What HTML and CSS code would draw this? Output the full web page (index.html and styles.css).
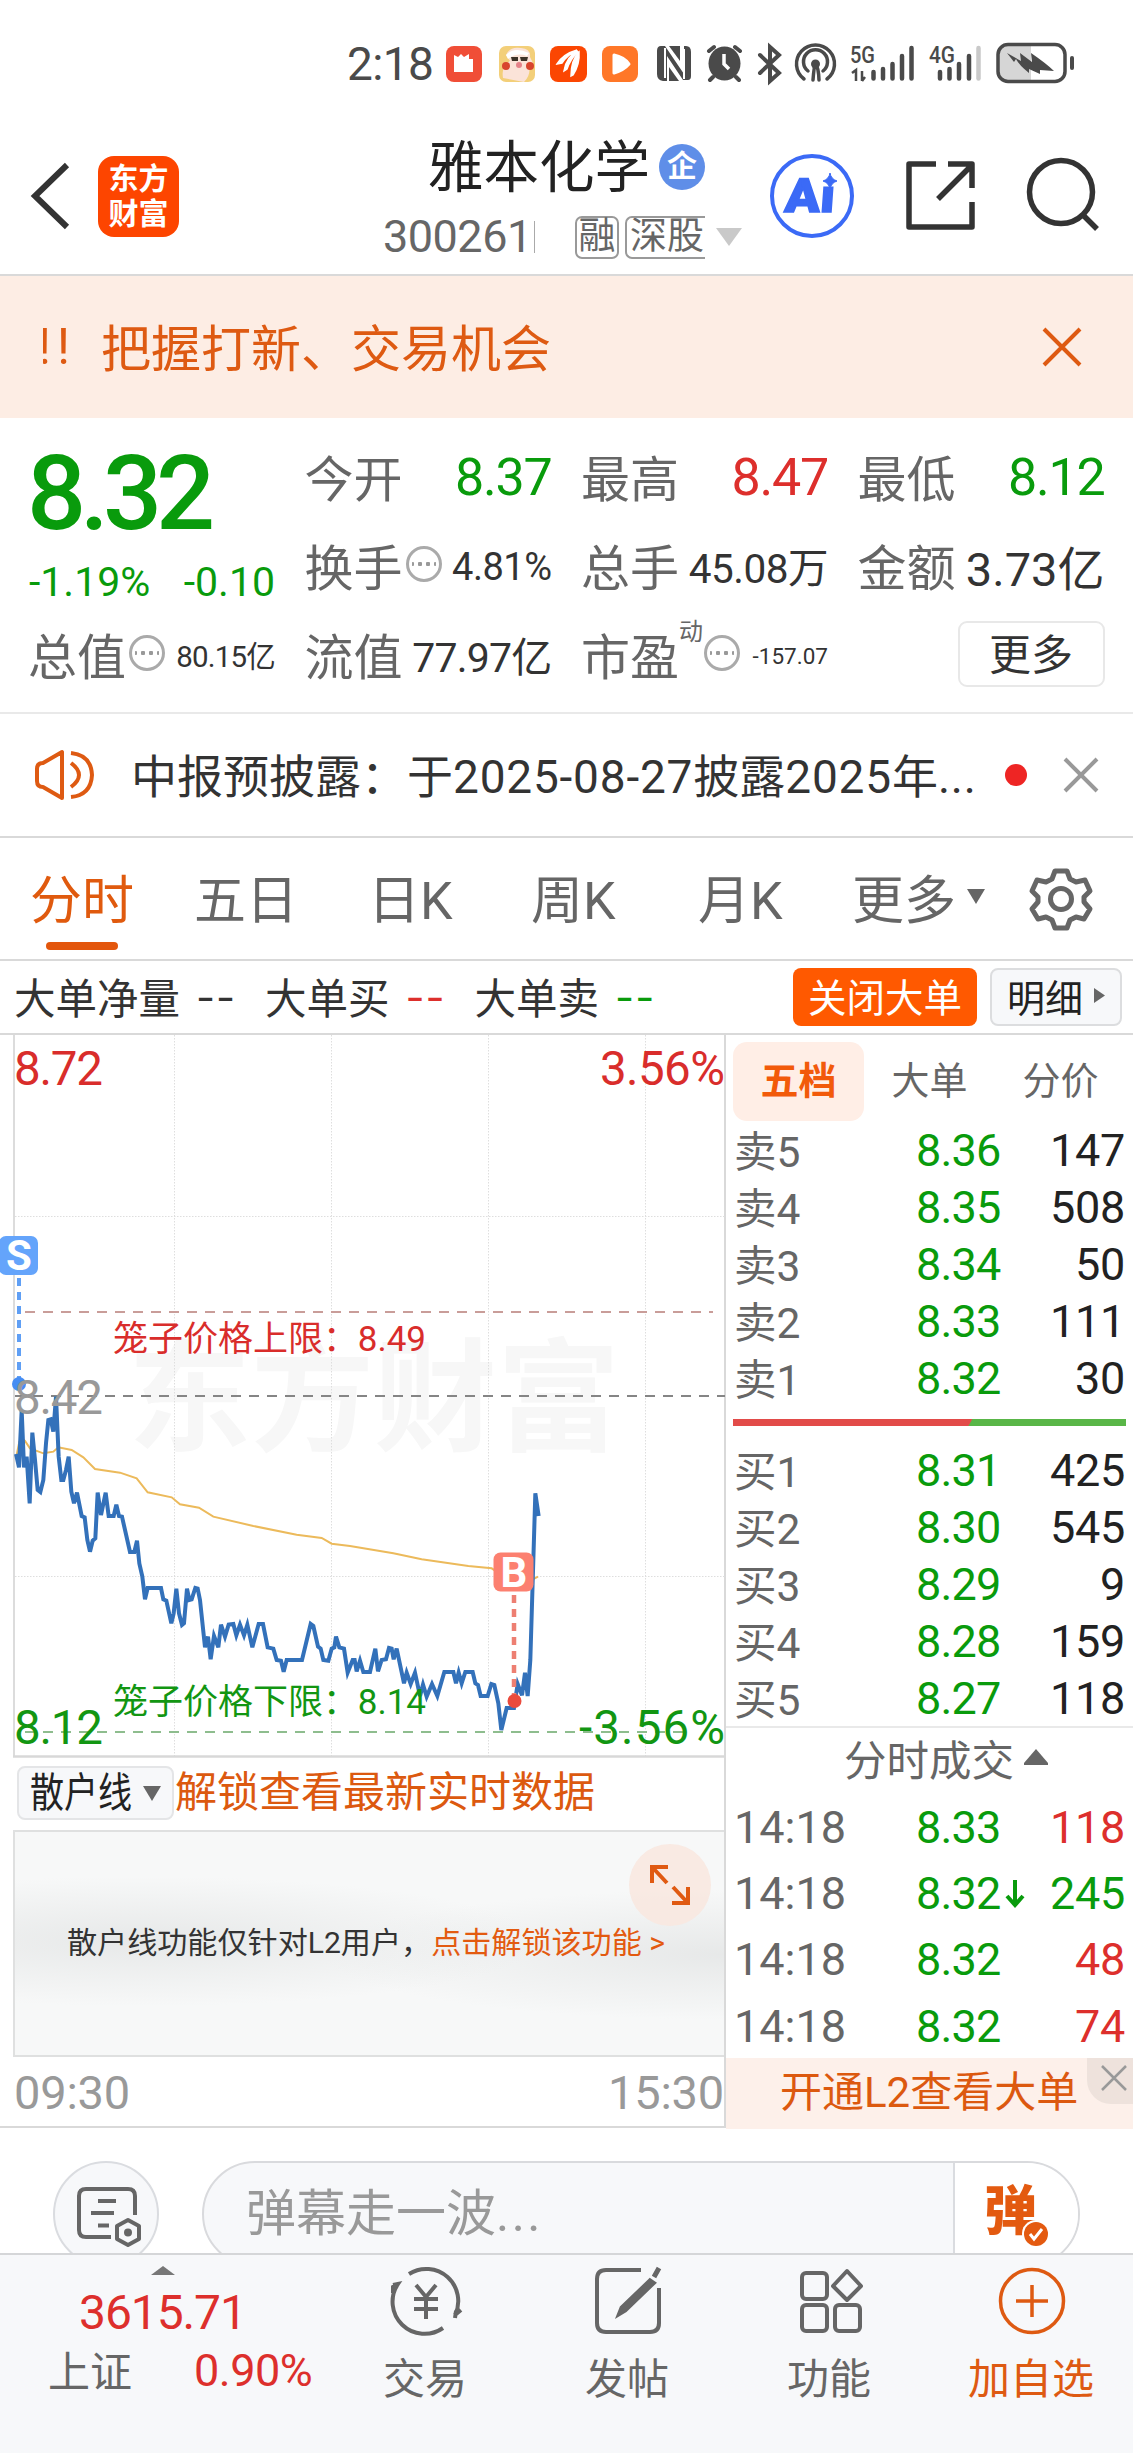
FILE: index.html
```html
<!DOCTYPE html>
<html lang="zh-CN">
<head>
<meta charset="utf-8">
<title>雅本化学 300261</title>
<link rel="stylesheet" href="styles.css">
</head>
<body>
<div class="status">
  <span class="clock">2:18</span>
  <svg class="status-icons" width="640" height="44" viewBox="440 42 640 44">
    <rect x="446" y="46" width="36" height="36" rx="8" fill="#f04e37"/>
    <path d="M454 55l4 2 3-3 3 3 5-3v5h4v13h-19z" fill="#fff"/>
    <rect x="499" y="46" width="36" height="36" rx="7" fill="#f3cf79"/>
    <path d="M503 78q-2-13 7-17l-4-6q4-9 15-7 10 1 9 9l3 6q0 4-4 4 2 8-5 15z" fill="#fbe3d8"/>
    <path d="M506 55q8-9 23-2l-2 3q-10-4-19 3z" fill="#fff"/>
    <path d="M511 57h7v4h-6zm9 0h8l-1 4h-6z" fill="#3d3328"/>
    <circle cx="519" cy="65" r="3" fill="#e5838a"/><circle cx="506" cy="66" r="4" fill="#d8452d"/><circle cx="530" cy="66" r="4" fill="#d8452d"/>
    <rect x="550" y="46" width="37" height="36" rx="8" fill="#fb4602"/>
    <path d="M557 64q6-10 20-14-10 5-15 13zM564 71q2-14 14-20-8 9-11 18zM571 76q0-16 8-24 1 12-6 23z" fill="#fff" stroke="#fff" stroke-width="1.500"/>
    <rect x="602" y="46" width="36" height="36" rx="8" fill="#ff7728"/>
    <path d="M614 55q10 2 15 9-5 6-15 9z" fill="#fff" stroke="#fff" stroke-width="3" stroke-linejoin="round"/>
    <g fill="#4a4a4a">
      <path d="M665 46l19 28V46h2q5 0 5 6v24q0 4-3 4h-5l-16-24v25h-4q-6-1-6-7V51q0-5 4-5z"/>
      <path d="M669 46h11v15z"/><path d="M669 81h10l-10-14z" />
      <ellipse cx="724.500" cy="63.500" rx="16" ry="17"/>
    </g>
    <path d="M665 48v30M684 49v30" stroke="#fff" stroke-width="2"/>
    <g fill="none" stroke="#4a4a4a" stroke-width="4" stroke-linecap="round">
      <path d="M709 51l5-4M740 51l-5-4M713 77l-3 3M736 77l3 3M760 55l19 18-9 8V47l9 8-19 18"/>
      <path d="M804 79a19 19 0 1 1 23 0M808 71a12 12 0 1 1 15 0" stroke-width="3.500"/>
      <path d="M813 80q1-14 2.500-16 3 3 3.500 16" stroke-width="3.500"/>
    </g>
    <path d="M724 54v10l5 5" fill="none" stroke="#fff" stroke-width="3.500"/>
    <circle cx="815.500" cy="64" r="4.500" fill="#4a4a4a"/>
    <g class="net"><text x="850" y="63" textLength="25" lengthAdjust="spacingAndGlyphs">5G</text><text x="929" y="63" textLength="26" lengthAdjust="spacingAndGlyphs">4G</text></g>
    <g fill="none" stroke="#4a4a4a" stroke-width="4.500" stroke-linecap="round">
      <path d="M873.500 72v6.500M883 69v9.500M892.500 64v14.500M902 56v22.500M911.500 48v30.500M940 72v6.500M949.500 69v9.500M959 64v14.500M969 56v22.500"/>
      <path d="M978.500 48v30.500" stroke="#c9c9c9"/>
    </g>
    <path d="M852 73l4-3v11m6 0v-10m0 10l3-4" stroke="#4a4a4a" stroke-width="2.500" fill="none"/>
    <path d="M1008 45h23v36h-23q-10 0-10-10V55q0-10 10-10z" fill="#d6d6d6"/>
    <rect x="998" y="44.500" width="67" height="37" rx="10" fill="none" stroke="#4a4a4a" stroke-width="3.500"/>
    <path d="M1007 53l14 8-1-8 12 9-1-9q16 11 23 18l-14-1v4l-11-5v4q-10-8-13-14l-2 3z" fill="#4a4a4a"/>
    <path d="M1072 58v10" stroke="#4a4a4a" stroke-width="4" stroke-linecap="round"/>
  </svg>
</div>

<header class="header">
  <svg width="44" height="70" viewBox="0 0 44 70"><path d="M39 4L7 35l32 31" fill="none" stroke="#333" stroke-width="6"/></svg>
  <div class="logo"><span>东方</span><span>财富</span></div>
  <div class="stock">
    <div class="name">雅本化学<i class="firm">企</i></div>
    <div class="code"><span class="num">300261</span><span class="tag">融</span><span class="tag cut">深股通</span><svg width="26" height="18" viewBox="0 0 26 18"><path d="M0 0h26L13 18z" fill="#c9c9c9"/></svg></div>
  </div>
  <svg class="tools" width="340" height="90" viewBox="766 151 340 90">
    <circle cx="812" cy="196" r="40" fill="none" stroke="#3b6af6" stroke-width="4"/>
    <g transform="translate(784 212) skewX(-4)"><text class="ai" textLength="50" lengthAdjust="spacingAndGlyphs">Aı</text></g>
    <path d="M830 173q1 6 7 8-6 2-7 8-1-6-7-8 6-2 7-8z" fill="#3b6af6" stroke="#3b6af6"/>
    <g fill="none" stroke="#333" stroke-width="5.500" stroke-linejoin="round">
      <path d="M936 164h-27v63h63v-25M948 164h24v24M972 165l-34 34"/>
      <circle cx="1061" cy="192" r="31.500"/><path d="M1083 215l14 14"/>
    </g>
  </svg>
</header>

<div class="banner"><span class="clip">!</span><span class="bang">!</span><span class="msg">把握打新、交易机会</span>
  <svg width="40" height="40" viewBox="0 0 40 40"><path d="M2 2l36 36M38 2L2 38" stroke="#de5a12" stroke-width="4"/></svg>
</div>

<section class="quote">
  <div class="now">
    <b class="last">8.32</b>
    <div class="chg"><span>-1.19%</span><span>-0.10</span></div>
  </div>
  <div class="cell"><label>今开</label><b class="v52 g">8.37</b></div>
  <div class="cell"><label>最高</label><b class="v52 r">8.47</b></div>
  <div class="cell"><label>最低</label><b class="v52 g">8.12</b></div>
  <div class="cell"><label>换手</label><i class="dots"></i><b class="v38">4.81%</b></div>
  <div class="cell"><label>总手</label><b class="v41">45.08万</b></div>
  <div class="cell"><label>金额</label><b class="v49">3.73亿</b></div>
  <div class="cell"><label>总值</label><i class="dots"></i><b class="v30">80.15亿</b></div>
  <div class="cell"><label>流值</label><b class="v42">77.97亿</b></div>
  <div class="cell"><label>市盈<sup>动</sup></label><i class="dots after-sup"></i><b class="v22">-157.07</b></div>
  <div class="cell end"><button class="more">更多</button></div>
</section>

<div class="notice">
  <svg width="64" height="54" viewBox="32 748 64 54" fill="none" stroke="#de5a12" stroke-width="4" stroke-linejoin="round"><path d="M62 752v46l-19-11q-6 0-6-6v-12q0-6 6-6z"/><path d="M71 763q16 12 0 24" /><path d="M71 753q20 2 21 22-1 20-21 22"/></svg>
  <span class="text">中报预披露：于<span>2025-08-27</span>披露<span>2025</span>年<span>...</span></span>
  <i class="dot"></i>
  <svg width="36" height="36" viewBox="0 0 36 36"><path d="M2 2l32 32M34 2L2 34" stroke="#999" stroke-width="4"/></svg>
</div>

<nav class="tabs">
  <span class="on">分时</span><span>五日</span><span>日K</span><span>周K</span><span>月K</span><span>更多<svg width="18" height="15" viewBox="0 0 18 15"><path d="M0 0h18L9 15z" fill="#666"/></svg></span>
  <svg class="gear" width="66" height="66" viewBox="-33 -33 66 66" fill="none" stroke="#666" stroke-width="5" stroke-linejoin="round"><path d="M-6-28H6L9-20 15-17 24-19 29-8 23-2V3L29 10 23 20 15 18 9 21 6 29H-6L-9 21-15 18-23 20-29 10-23 3V-2L-29-8-24-19-15-17-9-20z"/><circle r="10.500"/></svg>
</nav>

<div class="bigrow">
  <span>大单净量</span><i>--</i><span>大单买</span><i class="r">--</i><span>大单卖</span><i class="g">--</i>
  <button class="close-big">关闭大单</button>
  <button class="detail">明细<svg width="11" height="15" viewBox="0 0 11 15"><path d="M0 0l11 7.500L0 15z" fill="#666"/></svg></button>
</div>

<main class="board">
  <div class="left">
    <svg class="chart" width="725" height="724" viewBox="0 1035 725 724">
      <g class="mark"><text x="128" y="1441" textLength="492" lengthAdjust="spacingAndGlyphs">东方财富</text></g>
      <path d="M174.500 1035v722M331.500 1035v722M488.500 1035v722M645.500 1035v722M15 1216.500h710M15 1576.500h710" stroke="#dedede" stroke-dasharray="1.500 1.500"/>
      <path d="M14 1035v722" stroke="#dcdcdc" stroke-width="2"/>
      <path d="M13 1756.500h712" stroke="#d8d8d8" stroke-width="2.500"/>
      <path d="M25 1312h688" stroke="#c99d99" stroke-width="2" stroke-dasharray="10 8"/>
      <path d="M15 1396h710" stroke="#858585" stroke-width="2" stroke-dasharray="10 8"/>
      <path d="M25 1732h660" stroke="#8ebd8e" stroke-width="2" stroke-dasharray="10 8"/>
      <g transform="translate(0 1380) scale(.33333)" fill="none">
        <path stroke="#ecba5b" stroke-width="6" d="M50 225L58 185 66 175 75 183 90 205 130 220 160 215 175 202 215 210 250 232 285 267 360 278 410 295 443 337 515 352 540 373 597 383 640 410 760 438 890 464 965 474 995 491 1050 498 1180 520 1265 538 1405 558 1475 565 1505 585 1595 600 1614 590"/>
        <path stroke="#3371ba" stroke-width="12" d="M48 222L57 262 65 90 72 262 80 230 89 370 97 158 105 240 113 330 121 336 130 300 138 190 145 120 152 118 160 155 168 50 176 230 184 300 190 300 198 270 206 230 214 335 222 370 231 338 245 408 254 412 262 480 270 515 278 482 286 475 293 338 303 405 317 338 326 408 341 408 349 374 357 408 366 410 390 516 403 516 411 482 418 550 427 590 435 658 443 624 483 624 490 658 499 662 514 730 521 700 529 626 537 700 546 735 552 730 561 626 568 660 575 658 586 624 593 626 600 660 615 802 624 770 632 838 642 768 655 802 663 734 675 770 686 734 700 732 709 766 720 734 732 766 742 734 757 802 776 732 789 732 803 802 820 806 830 840 843 842 851 875 860 840 906 840 932 732 940 738 954 800 962 806 970 840 985 842 995 806 1003 802 1008 770 1018 802 1032 806 1043 878 1058 840 1064 840 1070 874 1080 842 1090 876 1110 876 1126 806 1134 874 1145 840 1158 838 1167 804 1175 806 1181 838 1190 806 1212 910 1220 878 1232 912 1245 878 1260 948 1269 914 1280 950 1296 912 1312 948 1333 876 1360 876 1368 910 1376 878 1385 910 1396 876 1418 876 1426 910 1434 915 1442 948 1463 948 1474 912 1483 915 1495 970 1504 1050 1520 984 1542 984 1553 912 1566 946 1575 878 1583 948 1591 840 1606 340 1616 408"/>
      </g>
      <path d="M19 1278v102" stroke="#5f9ff5" stroke-width="4" stroke-dasharray="8 6"/><circle cx="19" cy="1384" r="7" fill="#468df3"/>
      <rect x="-1" y="1236" width="39" height="39" rx="7" fill="#64a4fb"/><text class="sb" x="19" y="1270">S</text>
      <path d="M514 1595v100" stroke="#ed7f72" stroke-width="4.500" stroke-dasharray="8 6"/><circle cx="514.500" cy="1701" r="7" fill="#ea4b3d"/>
      <rect x="493.500" y="1552.500" width="40" height="39" rx="7" fill="#fc8070"/><text class="sb" x="514" y="1587">B</text>
      <g class="axis">
        <text class="fr" x="14" y="1085" textLength="89">8.72</text>
        <text class="fr" x="600" y="1085" textLength="125">3.56%</text>
        <text fill="#999" x="14" y="1414" textLength="89">8.42</text>
        <text class="fg" x="14" y="1744" textLength="89">8.12</text>
        <text class="fg" x="579" y="1744" textLength="146">-3.56%</text>
        <text class="cage fr" x="113" y="1351" textLength="313">笼子价格上限：8.49</text>
        <text class="cage fg" x="113" y="1714" textLength="313">笼子价格下限：8.14</text>
      </g>
    </svg>
    <div class="line-row"><button class="pick"><span>散户线</span><svg width="18" height="15" viewBox="0 0 18 15"><path d="M0 0h18L9 15z" fill="#666"/></svg></button><span class="unlock">解锁查看最新实时数据</span></div>
    <div class="locked">
      <p>散户线功能仅针对L2用户，<em>点击解锁该功能 &gt;</em></p>
      <div class="expand"><svg width="44" height="44" viewBox="0 0 44 44" fill="none" stroke="#e05a12" stroke-width="4"><path d="M20 4H4v16M5 5l14 15M24 40h16V24M39 39L25 24"/></svg></div>
    </div>
    <div class="times"><span>09:30</span><span>15:30</span></div>
  </div>
  <aside class="side">
    <div class="stabs"><b>五档</b><span>大单</span><span>分价</span></div>
    <div class="book">
      <div><label>卖5</label><b>8.36</b><span>147</span></div>
      <div><label>卖4</label><b>8.35</b><span>508</span></div>
      <div><label>卖3</label><b>8.34</b><span>50</span></div>
      <div><label>卖2</label><b>8.33</b><span>111</span></div>
      <div><label>卖1</label><b>8.32</b><span>30</span></div>
    </div>
    <div class="ratio"></div>
    <div class="book buy">
      <div><label>买1</label><b>8.31</b><span>425</span></div>
      <div><label>买2</label><b>8.30</b><span>545</span></div>
      <div><label>买3</label><b>8.29</b><span>9</span></div>
      <div><label>买4</label><b>8.28</b><span>159</span></div>
      <div><label>买5</label><b>8.27</b><span>118</span></div>
    </div>
    <div class="deal-head">分时成交<svg width="24" height="16" viewBox="0 0 24 16"><path d="M12 0l12 14v2H0v-2z" fill="#666"/></svg></div>
    <div class="deals">
      <div><label>14:18</label><b>8.33</b><span class="r">118</span></div>
      <div><label>14:18</label><b>8.32<svg width="20" height="28" viewBox="0 0 20 28" fill="none" stroke="#099b0c" stroke-width="4"><path d="M10 0v25M2 16l8 9 8-9"/></svg></b><span class="g">245</span></div>
      <div><label>14:18</label><b>8.32</b><span class="r">48</span></div>
      <div><label>14:18</label><b>8.32</b><span class="r">74</span></div>
    </div>
    <div class="promo">开通L2查看大单<i><svg width="26" height="26" viewBox="0 0 26 26"><path d="M1 1l24 24M25 1L1 25" stroke="#999" stroke-width="2.500"/></svg></i></div>
  </aside>
</main>

<div class="danmu">
  <div class="round"><svg width="66" height="62" viewBox="74 2186 66 62" fill="none" stroke="#666" stroke-width="4" stroke-linejoin="round"><path d="M134 2214v-19q0-7-7-7H85q-7 0-7 7v34q0 7 7 7h25M97 2200h18M90 2212h23M97 2224.500h11"/><path d="M127 2219l11 6v13l-11 6-11-6v-13z"/><circle cx="127" cy="2231.500" r="2"/></svg></div>
  <div class="field"><span>弹幕走一波<em>...</em></span><div class="send"><b>弹</b><svg width="30" height="30" viewBox="-15 -15 30 30"><circle r="14" fill="#fff"/><circle r="12" fill="#e45a10"/><path d="M-6 0l4 5L6-5" fill="none" stroke="#fff" stroke-width="3"/></svg></div></div>
</div>

<footer class="foot">
  <div class="index">
    <svg width="24" height="9" viewBox="0 0 24 9"><path d="M12 0l12 9H0z" fill="#777"/></svg>
    <b>3615.71</b>
    <div><label>上证</label><span>0.90%</span></div>
  </div>
  <div class="item"><svg width="80" height="72" viewBox="-40 -36 80 72" fill="none" stroke="#666" stroke-width="4"><path d="M-17-27A32 32 0 0 1 29 14L35 9M-33-16l5-1A32 32 0 0 0 17 27M-33-8v-6l5-3M29 17l1-7M-10-16L0-4 10-16M0-4v22M-12-2h24M-12 8h24"/></svg>交易</div>
  <div class="item"><svg width="72" height="72" viewBox="-36 -36 72 72" fill="none" stroke="#666" stroke-width="4"><path d="M13-31H-22q-9 0-9 9V22q0 9 9 9H22q9 0 9-9V-13"/><path d="M31-33L26-24M22-20L-6 7-8 12-3 9 25-18z" stroke-width="5"/></svg>发帖</div>
  <div class="item"><svg width="72" height="72" viewBox="-36 -36 72 72" fill="none" stroke="#666" stroke-width="4"><rect x="-28" y="-28" width="25" height="26" rx="4"/><rect x="-28" y="4" width="25" height="26" rx="4"/><rect x="5" y="4" width="25" height="26" rx="4"/><path d="M17-30L31-15 17-1 3-15z" stroke-linejoin="round"/></svg>功能</div>
  <div class="item hot"><svg width="72" height="72" viewBox="-36 -36 72 72" fill="none" stroke="#de5a12" stroke-width="3.500"><circle r="31.500"/><path d="M-16 0H16M0-16V16"/></svg>加自选</div>
</footer>
</body>
</html>
```
FILE: styles.css
```css
* { box-sizing: border-box; }
body { margin: 0; width: 1133px; height: 2453px; overflow: hidden; background: #fff; color: #333; font-family: Roboto, "Noto Sans CJK SC", sans-serif; }
i, em { font-style: normal; }
b { font-weight: 400; }
svg { display: block; flex: none; }
button { font: inherit; color: inherit; padding: 0 0 4px; margin: 0; display: flex; align-items: center; justify-content: center; }
.r { color: #dd2f2c; }
.g { color: #099b0c; }
.fr { fill: #d92d2b; }
.fg { fill: #129612; }

.status { height: 128px; padding-left: 347px; display: flex; align-items: center; }
.clock { width: 93px; font-size: 46px; letter-spacing: -.6px; color: #4a4a4a; }
.net { font-size: 24px; font-weight: 500; fill: #4a4a4a; }

.header { height: 148px; padding: 0 27px 3px 28px; display: flex; align-items: flex-start; border-bottom: 2px solid #d9d9d9; }
.header > svg:first-child { margin-top: 33px; }
.logo { margin: 28px 0 0 26px; width: 81px; height: 81px; padding-bottom: 2px; border-radius: 16px; background: #fd4500; color: #fff; font-weight: 700; font-size: 30px; line-height: 35px; display: flex; flex-direction: column; align-items: center; justify-content: center; }
.stock { width: 366px; margin-left: 202px; }
.name { height: 74px; padding: 0 0 4px 47px; display: flex; align-items: center; font-size: 55.500px; color: #222; }
.firm { width: 46px; height: 46px; margin: 7px 0 0 9px; border-radius: 50%; background: #5f8ee8; color: #fff; font-size: 30px; font-weight: 700; line-height: 43px; text-align: center; }
.code { height: 64px; margin-top: 3px; padding-left: 2px; display: flex; align-items: center; color: #666; font-size: 45px; }
.num { width: 152px; letter-spacing: -.5px; border-right: 1px solid #aaa; line-height: 32px; }
.tag { border: 2px solid #999; border-radius: 7px; width: 44px; height: 43px; line-height: 37px; font-size: 37px; text-align: center; margin-left: 40px; }
.tag.cut { margin-left: 6px; width: 80px; padding-left: 3px; border-right: 0; border-radius: 7px 0 0 7px; overflow: hidden; white-space: nowrap; text-align: left; }
.code svg { margin: 0 0 0 11px; }
.tools { margin: 23px 0 0 19px; }
.ai { font-size: 47px; font-weight: 900; fill: #3b6af6; stroke: #3b6af6; stroke-width: 1.500px; }

.banner { height: 142px; background: #fdede4; color: #de5a12; font-size: 50px; padding: 0 51px 0 43px; display: flex; align-items: center; }
.clip { width: 8px; overflow: hidden; display: flex; justify-content: flex-end; }
.bang { margin-left: 6px; width: 44px; }
.msg { flex: 1; padding-bottom: 5px; }

.quote { height: 296px; padding: 15px 28px 13px 29px; display: grid; grid-template-columns: repeat(4, 246px); column-gap: 30.500px; grid-template-rows: repeat(3, 89px); border-bottom: 2px solid #e9e9e9; }
.now { grid-row: span 2; color: #099b0c; }
.last { display: block; height: 118px; line-height: 122px; margin-left: -2px; font-size: 104px; font-weight: 500; letter-spacing: -6px; }
.chg { display: flex; justify-content: space-between; font-size: 41px; line-height: 62px; }
.cell { display: flex; align-items: center; min-width: 0; white-space: nowrap; }
.cell label { font-size: 49px; color: #666; position: relative; padding-bottom: 5px; margin-left: -1px; }
.cell b { margin-left: auto; }
.cell sup { position: absolute; left: 98px; top: 0; font-size: 24px; line-height: 28px; }
.v52 { font-size: 52px; letter-spacing: -1.200px; } .v49 { font-size: 47px; } .v42 { font-size: 41px; letter-spacing: -.8px; } .v41 { font-size: 40.500px; letter-spacing: -.5px; } .v38 { font-size: 38px; letter-spacing: -.5px; } .v30 { font-size: 29.500px; letter-spacing: -.8px; } .v22 { font-size: 22.500px; }
.v49, .v42, .v41, .v30 { padding-bottom: 3px; }
.dots { width: 36px; height: 36px; margin: -6px 0 0 3px; border: 3px solid #aaa; border-radius: 50%; flex: none; background: radial-gradient(circle, #999 2px, transparent 2.500px) -1px 0/8px 30px repeat-x; background-clip: content-box; padding: 0 3px; }
.dots.after-sup { margin-left: 25px; }
.end { justify-content: flex-end; }
.more { width: 147px; height: 66px; margin-bottom: 4px; border: 2px solid #e8e8e8; border-radius: 9px; background: #fff; font-size: 42px; }

.notice { height: 124px; padding: 0 34px 0 32px; display: flex; align-items: center; border-bottom: 2px solid #d9d9d9; }
.notice .text { width: 871px; margin-left: 35px; padding-bottom: 4px; font-size: 46px; white-space: nowrap; }
.text span { letter-spacing: .8px; }
.dot { width: 22px; height: 22px; margin: 0 36px 0 3px; border-radius: 50%; background: #ee2524; }

.tabs { height: 123px; padding-left: 30px; display: flex; align-items: center; font-size: 52px; color: #666; border-bottom: 2px solid #d9d9d9; position: relative; }
.tabs > span { height: 123px; display: flex; align-items: center; width: 164px; padding-bottom: 4px; }
.tabs > span:nth-child(2) { width: 174px; }
.tabs > span:nth-child(3) { width: 163px; }
.tabs > span:nth-child(4) { width: 167px; }
.tabs > span:nth-child(5) { width: 154px; }
.tabs > span:nth-child(6) { width: 176px; }
.tabs > span svg { margin-left: 11px; }
.tabs .on { color: #e05a0e; position: relative; }
.on::after { content: ""; position: absolute; left: 16px; top: 105px; width: 72px; height: 8px; border-radius: 4px; background: #e3560c; }

.bigrow { height: 74px; padding: 0 11px 0 14px; display: flex; align-items: center; font-size: 41.500px; border-bottom: 2px solid #d9d9d9; }
.bigrow > span { padding-bottom: 3px; }
.bigrow i { width: 69px; margin-left: 16px; font-family: Inter, sans-serif; letter-spacing: 1px; white-space: nowrap; }
.close-big { margin-left: auto; width: 184px; height: 58px; border: 0; border-radius: 8px; background: #ff5900; color: #fff; font-size: 38.500px; }
.detail { margin-left: 13px; width: 132px; height: 58px; border: 2px solid #dcdddf; border-radius: 8px; background: #f7f8fa; font-size: 38px; color: #222; }
.detail svg { margin-left: 11px; }

.board { height: 1093px; display: flex; border-bottom: 2px solid #d9d9d9; }
.left { width: 726px; border-right: 2px solid #d9d9d9; }
.chart text { font-family: Roboto, "Noto Sans CJK SC", sans-serif; }
.mark { font-size: 122px; font-weight: 700; fill: #f7f7f7; }
.axis { font-size: 47.500px; }
.axis .cage { font-size: 35px; }
.chart .sb { font-size: 42px; font-weight: 700; fill: #fff; text-anchor: middle; }
.line-row { height: 71px; padding: 7px 0 0 17px; display: flex; align-items: flex-start; font-size: 42px; line-height: 54px; }
.pick { width: 157px; height: 54px; border: 2px solid #e4e5e7; border-radius: 8px; background: #f7f8fa; color: #222; font-size: 41px; justify-content: flex-start; padding: 0 0 0 11px; }
.pick span { width: 113px; transform: scaleX(.83); transform-origin: left; white-space: nowrap; }
.unlock { color: #dc590f; margin-left: 1px; }
.locked { height: 227px; margin-left: 13px; border: 2px solid #dfe0e0; border-right: 0; background: radial-gradient(ellipse 400px 65px at 18% 49%, rgba(224,226,226,.7), transparent), radial-gradient(ellipse 400px 65px at 100% 55%, rgba(224,226,226,.7), transparent), #f7f8f8; position: relative; display: flex; align-items: center; }
.locked p { margin: -8px 0 0 52px; font-size: 30.100px; white-space: nowrap; }
.locked em { color: #e35a10; }
.expand { position: absolute; right: 13px; top: 12px; width: 82px; height: 82px; border-radius: 50%; background: rgba(248,232,224,.9); display: flex; align-items: center; justify-content: center; }
.times { height: 71px; padding: 0 0 0 14px; display: flex; justify-content: space-between; align-items: center; font-size: 47px; letter-spacing: -.2px; color: #999; }

.side { width: 407px; font-size: 45px; }
.stabs { height: 86px; padding: 7px 0 0 7px; display: flex; font-size: 38px; line-height: 78px; text-align: center; color: #666; }
.stabs > * { width: 131px; }
.stabs b { background: #ffeee6; color: #f25a0a; font-weight: 700; border-radius: 14px; }
.book { height: 286px; padding-top: 1px; }
.book > div, .deals > div { height: 57px; padding: 0 8px 0 8px; display: flex; align-items: center; }
.side label { width: 182px; color: #666; }
.book label { font-size: 42.500px; padding-bottom: 4px; }
.side .book b, .side .deals b { width: 112px; color: #099b0c; display: flex; align-items: center; letter-spacing: -.8px; }
.side .deals span, .side .book span { margin-left: auto; letter-spacing: -.3px; }
.book span { color: #222; }
.ratio { height: 7px; margin: 12px 7px 16px; background: linear-gradient(120deg, #e24b49 60.200%, #59b647 60.400%); }
.book.buy { height: 284px; padding-top: 0; }
.deal-head { height: 68px; padding: 0 0 7px 118px; border-top: 2px solid #e9e9e9; display: flex; align-items: center; font-size: 42.500px; color: #666; }
.deal-head svg { margin: -2px 0 0 10px; }
.deals { height: 264px; }
.deals > div { height: 66.400px; }
.deals b svg { margin-left: 4px; }
.promo { height: 71px; position: relative; background: #fdf0ea; color: #dc590f; font-size: 42px; line-height: 69px; padding-left: 54px; white-space: nowrap; }
.promo i { position: absolute; right: 0; top: 0; width: 46px; height: 46px; background: #eee2dc; border-radius: 0 0 0 24px; padding: 7px 0 0 14px; }

.danmu { height: 125px; padding: 33px 53px 0; display: flex; overflow: hidden; }
.round { width: 106px; height: 106px; flex: none; border: 2px solid #dadce0; border-radius: 50%; background: #f7f8fa; padding: 24px 0 0 20px; }
.field { margin-left: 43px; width: 878px; height: 106px; border: 2px solid #d9dadd; border-radius: 53px; background: #f7f8fa; overflow: hidden; display: flex; }
.field > span { width: 749px; padding-left: 42px; font-size: 50px; line-height: 102px; color: #999; }
.field em { letter-spacing: 2.500px; }
.send { flex: 1; background: #fff; border-left: 2px solid #dadce0; color: #e35a10; font-size: 53px; line-height: 98px; padding-left: 29px; position: relative; }
.send b { font-weight: 900; }
.send svg { position: absolute; left: 66px; top: 56px; }

.foot { height: 201px; border-top: 2px solid #d5d6d8; background: #f7f8fa; display: flex; }
.index { width: 324px; color: #dd2f2c; font-size: 45px; }
.index > svg { margin: 11px 0 0 151px; }
.index > b { display: block; font-size: 48px; line-height: 60px; letter-spacing: -1.100px; margin: 8px 0 0 79px; }
.index > div { display: flex; align-items: center; height: 54px; padding-left: 48px; letter-spacing: -.5px; }
.index label { width: 146px; padding-bottom: 4px; font-size: 42px; letter-spacing: 0; color: #666; }
.item { width: 202px; padding-top: 10px; display: flex; flex-direction: column; align-items: center; font-size: 42px; line-height: 80px; color: #666; }
.item svg { margin: 0 0 3px 1px; }
.hot { color: #de5a12; }
```
